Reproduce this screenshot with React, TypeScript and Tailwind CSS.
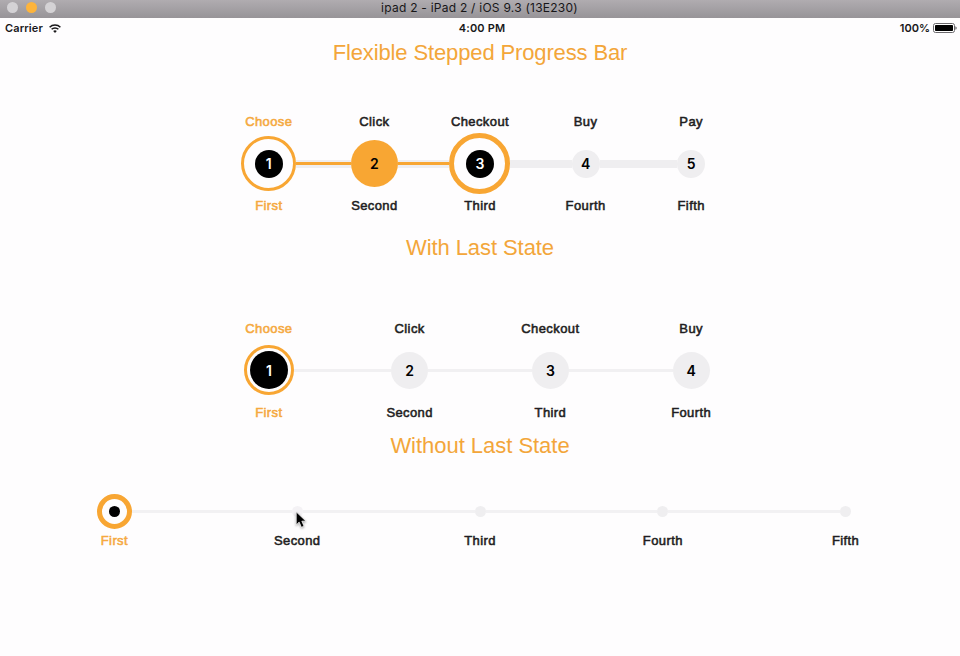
import React from "react";

type Step = {
  top?: string;
  bottom: string;
  num?: string;
  size: string;
  ring?: string;
  core: string;
  labelColor: string;
  before?: "idle" | "done" | "none";
  after?: "idle" | "done" | "none";
};

const ORANGE = "text-[#f5a93f]";
const DARK = "text-[#1f1e22]";
const IDLE = "bg-[#efeef0] text-black";
const BLACK = "bg-black text-white";

const first: Step[] = [
  { top: "Choose", bottom: "First", num: "1", size: "size-[55px]", ring: "border-[3px] border-[#f8a633]", core: `size-[28px] ${BLACK}`, labelColor: ORANGE, before: "none", after: "done" },
  { top: "Click", bottom: "Second", num: "2", size: "size-[47px]", core: "size-[47px] bg-[#f8a633] text-black", labelColor: DARK, before: "done", after: "done" },
  { top: "Checkout", bottom: "Third", num: "3", size: "size-[61px]", ring: "border-[5px] border-[#f8a633]", core: `size-[28px] ${BLACK}`, labelColor: DARK, before: "done", after: "idle" },
  { top: "Buy", bottom: "Fourth", num: "4", size: "size-[28px]", core: `size-[28px] ${IDLE}`, labelColor: DARK, before: "idle", after: "idle" },
  { top: "Pay", bottom: "Fifth", num: "5", size: "size-[28px]", core: `size-[28px] ${IDLE}`, labelColor: DARK, before: "idle", after: "none" },
];

const second: Step[] = [
  { top: "Choose", bottom: "First", num: "1", size: "size-[50px]", ring: "border-[3px] border-[#f8a633]", core: `size-[38px] pt-px ${BLACK}`, labelColor: ORANGE, before: "none", after: "idle" },
  { top: "Click", bottom: "Second", num: "2", size: "size-[37px]", core: `size-[37px] pt-px ${IDLE}`, labelColor: DARK, before: "idle", after: "idle" },
  { top: "Checkout", bottom: "Third", num: "3", size: "size-[37px]", core: `size-[37px] pt-px ${IDLE}`, labelColor: DARK, before: "idle", after: "idle" },
  { top: "Buy", bottom: "Fourth", num: "4", size: "size-[37px]", core: `size-[37px] pt-px ${IDLE}`, labelColor: DARK, before: "idle", after: "none" },
];

const third: Step[] = [
  { bottom: "First", size: "size-[35px]", ring: "border-[5px] border-[#f8a633]", core: "size-[11px] bg-black", labelColor: ORANGE, before: "none", after: "idle" },
  { bottom: "Second", size: "size-[11px]", core: "size-[11px] bg-[#f4f2f5]", labelColor: DARK, before: "idle", after: "idle" },
  { bottom: "Third", size: "size-[11px]", core: "size-[11px] bg-[#efeef0]", labelColor: DARK, before: "idle", after: "idle" },
  { bottom: "Fourth", size: "size-[11px]", core: "size-[11px] bg-[#efeef0]", labelColor: DARK, before: "idle", after: "idle" },
  { bottom: "Fifth", size: "size-[11px]", core: "size-[11px] bg-[#efeef0]", labelColor: DARK, before: "idle", after: "none" },
];

function Line({ state, thickness }: { state?: string; thickness: string }) {
  if (state === "none") return <div className="flex-1" />;
  return (
    <div className={`flex flex-1 items-center ${thickness}`}>
      {state === "done" && <div className="h-[3px] w-full bg-[#f8a633]" />}
    </div>
  );
}

function Label({ text, color }: { text: string; color: string }) {
  return (
    <div className={`h-4 text-center text-[13px] leading-4 tracking-[0.4px] [-webkit-text-stroke:0.55px_currentColor] ${color}`}>
      {text}
    </div>
  );
}

function Stepper({ steps, width, row, line }: { steps: Step[]; width: string; row: string; line: string }) {
  return (
    <div className={`mx-auto flex ${width}`}>
      {steps.map((s) => (
        <div key={s.bottom} className="flex min-w-0 flex-1 flex-col">
          {s.top && <Label text={s.top} color={s.labelColor} />}
          <div className={`flex items-center ${row}`}>
            <Line state={s.before} thickness={line} />
            <div className={`flex shrink-0 items-center justify-center rounded-full ${s.size} ${s.ring ?? ""}`}>
              <div className={`flex shrink-0 items-center justify-center rounded-full font-[Inter,sans-serif] text-[14px] leading-none font-semibold ${s.core}`}>
                {s.num}
              </div>
            </div>
            <Line state={s.after} thickness={line} />
          </div>
          <Label text={s.bottom} color={s.labelColor} />
        </div>
      ))}
    </div>
  );
}

function Heading({ children, spacing }: { children: React.ReactNode; spacing: string }) {
  return <h2 className={`h-7 text-center text-[22px] leading-7 text-[#f3a63a] ${spacing}`}>{children}</h2>;
}

export default function App() {
  return (
    <div className="relative h-[656px] w-[960px] overflow-hidden bg-[#fefdfe] font-['Liberation_Sans',Arial,sans-serif]">
      <header className="flex h-[18px] items-center bg-linear-to-b from-[#b0acb0] to-[#979498] font-[Inter,sans-serif]">
        <div className="flex w-[200px] items-center gap-[8px] pb-[3px] pl-[7px]">
          <span className="size-[11px] rounded-full bg-[#d4d2d5]" />
          <span className="size-[11px] rounded-full bg-[#fdb43c]" />
          <span className="size-[11px] rounded-full bg-[#d4d2d5]" />
        </div>
        <div className="flex-1 pr-px pb-[2px] text-center text-[12px] leading-4 tracking-[0.24px] text-[#171618]">
          ipad 2 - iPad 2 / iOS 9.3 (13E230)
        </div>
        <div className="w-[200px]" />
      </header>

      <div className="flex h-5 items-center font-[Inter,sans-serif] text-[11px] leading-5 font-semibold text-[#19181a]">
        <div className="flex w-[200px] items-center gap-[6px] pl-[5px]">
          <span className="tracking-[0.12px]">Carrier</span>
          <svg width="12" height="9" viewBox="0 0 12 9" fill="none" stroke="#19181a" strokeWidth="1.5">
            <path d="M.6 3.2a7.6 7.6 0 0 1 10.8 0" />
            <path d="M2.6 5.3a4.8 4.8 0 0 1 6.8 0" />
            <path d="M6 9 4.2 7.1a2.6 2.6 0 0 1 3.6 0z" fill="#19181a" stroke="none" />
          </svg>
        </div>
        <div className="flex-1 pl-[4px] text-center tracking-[0.15px]">4:00 PM</div>
        <div className="flex w-[200px] items-center justify-end gap-[3px] pr-[3px]">
          <span>100%</span>
          <svg width="24" height="10" viewBox="0 0 24 10">
            <rect x=".5" y=".5" width="21" height="9" rx="2" fill="#fff" stroke="#6b696d" />
            <rect x="2" y="2" width="18" height="6" rx=".8" fill="#000" />
            <path d="M22.5 3.2c1.4.5 1.4 3.1 0 3.6z" fill="#39373a" />
          </svg>
        </div>
      </div>

      <main>
        <div className="pt-px">
          <Heading spacing="tracking-[-0.13px]">Flexible Stepped Progress Bar</Heading>
        </div>
        <div className="pt-[47px]">
          <Stepper steps={first} width="w-[528px]" row="mt-[3px] mb-[4px] h-[61px]" line="h-2 bg-[#efeef0]" />
        </div>
        <div className="pt-[20px]">
          <Heading spacing="tracking-[-0.08px]">With Last State</Heading>
        </div>
        <div className="pt-[59px]">
          <Stepper steps={second} width="w-[563px]" row="mt-2 mb-[10px] h-[50px]" line="h-[3px] bg-[#f1f0f2]" />
        </div>
        <div className="pt-[11px]">
          <Heading spacing="tracking-[-0.03px]">Without Last State</Heading>
        </div>
        <div className="pt-[33px]">
          <Stepper steps={third} width="w-[914px]" row="mb-[3px] h-[37px]" line="h-[3px] bg-[#f2f1f3]" />
        </div>
      </main>

      <svg className="absolute top-[511px] left-[295px] drop-shadow-[0_1px_1px_rgba(0,0,0,0.35)]" width="13" height="18" viewBox="0 0 12 17">
        <path d="M1 .8v12.4l2.8-2.7 2.1 4.9 2.5-1.1-2.1-4.7h3.9z" fill="#000" stroke="#fff" strokeWidth=".7" />
      </svg>
    </div>
  );
}
